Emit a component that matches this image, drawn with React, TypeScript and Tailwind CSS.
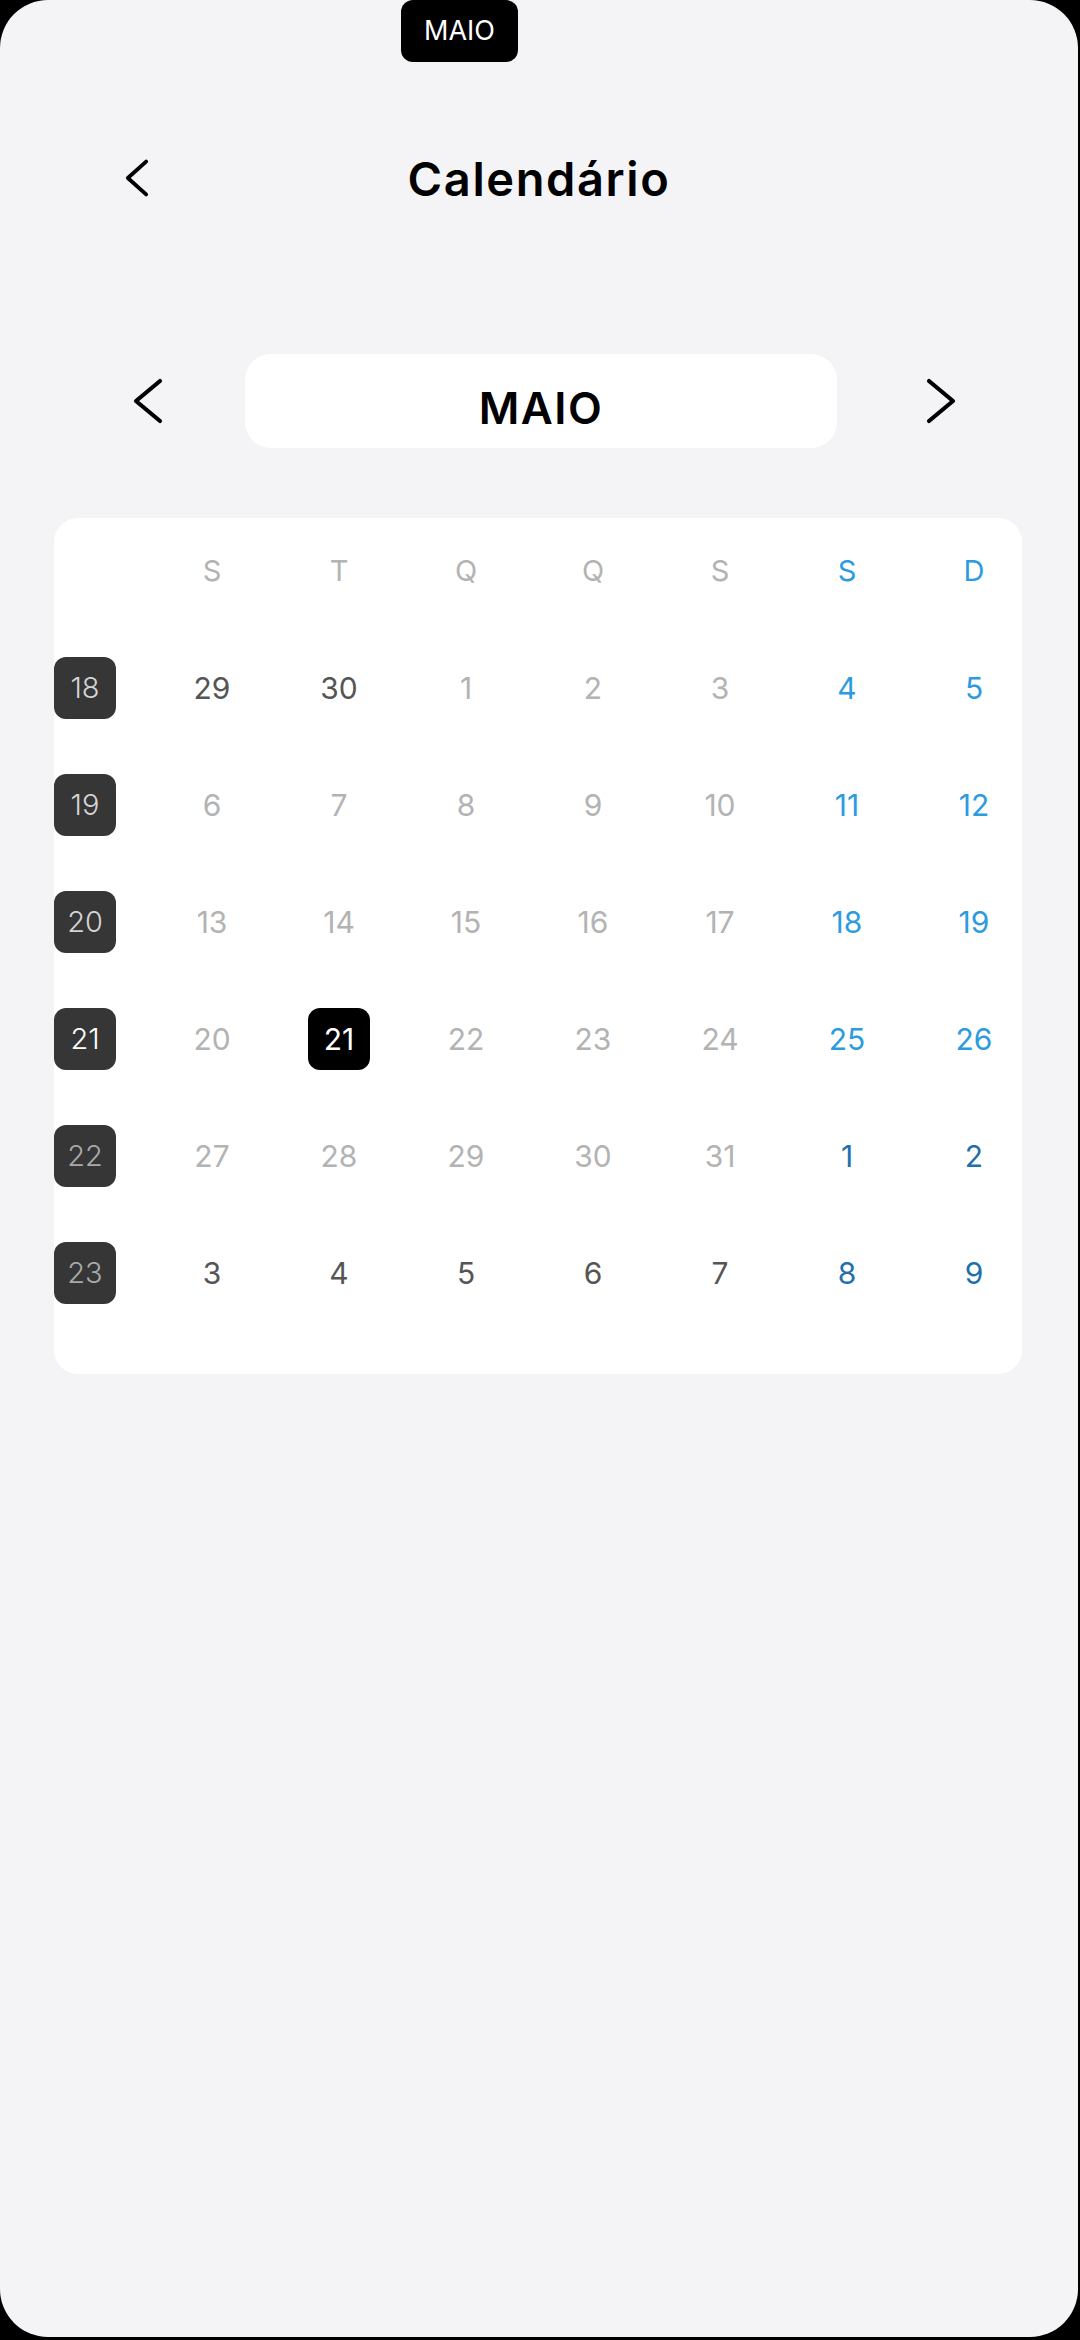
type Kind = "prev" | "cur" | "next";

type Day = { d: number; k: Kind };

const cur = (d: number): Day => ({ d, k: "cur" });
const prev = (d: number): Day => ({ d, k: "prev" });
const next = (d: number): Day => ({ d, k: "next" });

const weeks: { n: number; days: Day[] }[] = [
  { n: 18, days: [prev(29), prev(30), cur(1), cur(2), cur(3), cur(4), cur(5)] },
  { n: 19, days: [6, 7, 8, 9, 10, 11, 12].map(cur) },
  { n: 20, days: [13, 14, 15, 16, 17, 18, 19].map(cur) },
  { n: 21, days: [20, 21, 22, 23, 24, 25, 26].map(cur) },
  { n: 22, days: [cur(27), cur(28), cur(29), cur(30), cur(31), next(1), next(2)] },
  { n: 23, days: [3, 4, 5, 6, 7, 8, 9].map(next) },
];

const weekdays = ["S", "T", "Q", "Q", "S", "S", "D"];

const CURRENT_WEEK = 21;
const SELECTED = 21;

function dayColor(day: Day, col: number) {
  const weekend = col >= 5;
  if (day.k === "cur") return weekend ? "text-[#2d9be0]" : "text-[#b3b3b3]";
  if (day.k === "next" && weekend) return "text-[#1f70ad]";
  return "text-[#555555]";
}

function weekNumColor(n: number) {
  if (n === CURRENT_WEEK) return "text-white";
  if (n < CURRENT_WEEK) return "text-[#d4d4d4]";
  return "text-[#a9a9a9]";
}

const Chevron = ({ dir, className }: { dir: "left" | "right"; className?: string }) => (
  <svg viewBox="0 0 32 46" className={className} fill="none" stroke="currentColor" strokeWidth={4.2} strokeLinecap="round" strokeLinejoin="round">
    {dir === "left" ? <path d="M28 3 L4 23 L28 43" /> : <path d="M4 3 L28 23 L4 43" />}
  </svg>
);

export default function App() {
  return (
    <div className="w-[1080px] h-[2340px] bg-black" style={{ fontFamily: "Inter, 'Noto Sans', sans-serif" }}>
      <div className="relative w-[1078px] h-[2337px] rounded-[48px] bg-[#f4f4f6] overflow-hidden">
        {/* toast */}
        <div className="absolute left-[401px] top-0 w-[117px] h-[62px] rounded-[12px] bg-black flex items-center justify-center text-white text-[27px] font-normal">
          MAIO
        </div>

        {/* header */}
        <div className="pt-[140px] h-[216px] flex items-center">
          <div className="w-[149px] pl-[124px] flex items-center">
            <svg viewBox="0 0 26 40" className="w-[26px] h-[40px] text-black" fill="none" stroke="currentColor" strokeWidth={4} strokeLinecap="round" strokeLinejoin="round">
              <path d="M23 3 L4 20 L23 37" />
            </svg>
          </div>
          <h1 className="flex-1 text-center text-[47px] font-semibold text-black leading-none tracking-[1.6px]">Calendário</h1>
          <div className="w-[149px]" />
        </div>

        {/* month selector */}
        <div className="mt-[138px] flex items-center">
          <Chevron dir="left" className="ml-[132px] w-[32px] h-[46px] text-black" />
          <div className="ml-[81px] w-[592px] h-[94px] pt-[14px] rounded-[26px] bg-white flex items-center justify-center text-[44px] font-semibold text-black tracking-[1.5px]">
            MAIO
          </div>
          <Chevron dir="right" className="ml-[88px] w-[32px] h-[46px] text-black" />
        </div>

        {/* calendar */}
        <div className="mt-[70px] ml-[54px] w-[968px] bg-white rounded-[24px] pt-[22px] pb-[70px]">
          <div className="grid grid-cols-[repeat(8,62px)] auto-rows-[62px] gap-x-[65px] gap-y-[55px]">
            <div />
            {weekdays.map((w, i) => (
              <div
                key={i}
                className={`flex items-center justify-center text-[29px] ${i >= 5 ? "text-[#2d9be0]" : "text-[#b3b3b3]"}`}
              >
                {w}
              </div>
            ))}
            {weeks.map((wk) => (
              <>
                <div
                  key={`w${wk.n}`}
                  className={`rounded-[12px] bg-[#363636] flex items-center justify-center text-[29px] font-light ${weekNumColor(wk.n)}`}
                >
                  {wk.n}
                </div>
                {wk.days.map((day, i) => {
                  const selected = day.k === "cur" && day.d === SELECTED;
                  return (
                    <div
                      key={`${wk.n}-${i}`}
                      className={`flex items-center justify-center text-[30px] ${
                        selected ? "rounded-[12px] bg-black text-white" : dayColor(day, i)
                      }`}
                    >
                      {day.d}
                    </div>
                  );
                })}
              </>
            ))}
          </div>
        </div>
      </div>
    </div>
  );
}
